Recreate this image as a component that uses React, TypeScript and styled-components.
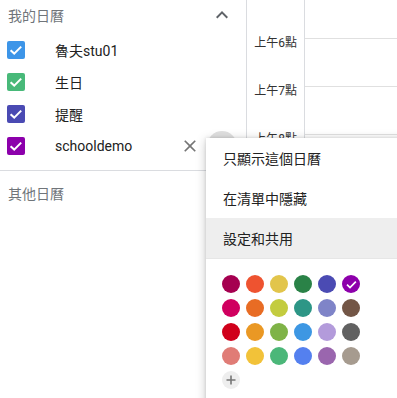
import React from "react";
import styled, { createGlobalStyle } from "styled-components";

const Global = createGlobalStyle`
  html, body { margin: 0; padding: 0; background: #fff; overflow: hidden; }
  body { font-family: Roboto, "Noto Sans CJK TC", sans-serif; }
`;

const Page = styled.div`
  position: relative;
  display: flex;
  width: 397px;
  height: 398px;
  overflow: hidden;
  background: #fff;
`;

const Sidebar = styled.aside`
  flex: none;
  width: 247px;
  box-sizing: border-box;
  border-right: 1px solid #dadce0;
`;

const SectionHeader = styled.div<{ $top?: number }>`
  display: flex;
  align-items: center;
  justify-content: space-between;
  height: 30px;
  margin-top: ${(p) => p.$top ?? 0}px;
  padding: 0 12px 0 8px;
  font-size: 14px;
  color: #70757a;
`;

const IconBox = styled.span<{ $size: number; $color: string }>`
  display: inline-flex;
  align-items: center;
  justify-content: center;
  width: ${(p) => p.$size}px;
  height: ${(p) => p.$size}px;
  color: ${(p) => p.$color};
  flex: none;
`;

const List = styled.div`
  padding-top: 4px;
`;

const Row = styled.div`
  display: flex;
  align-items: center;
  height: 32px;
  padding: 0 9px 0 7px;
`;

const Box = styled.span<{ $color: string }>`
  flex: none;
  display: inline-flex;
  align-items: center;
  justify-content: center;
  width: 18px;
  height: 18px;
  border-radius: 2px;
  background: ${(p) => p.$color};
  margin-right: 30px;
`;

const Label = styled.span`
  flex: 1;
  font-size: 14px;
  color: #212121;
  white-space: nowrap;
`;

const RemoveButton = styled.span`
  display: inline-flex;
  align-items: center;
  justify-content: center;
  width: 24px;
  height: 24px;
  margin-right: 5px;
  color: #757575;
`;

const MoreButton = styled.span`
  width: 30px;
  height: 30px;
  border-radius: 50%;
  background: #e0e0e0;
`;

const Divider = styled.div`
  height: 1px;
  background: #dadce0;
  margin-top: 8px;
`;

const TimeColumn = styled.div`
  flex: none;
  width: 58px;
  box-sizing: border-box;
  border-right: 1px solid #dadce0;
  padding-top: 37px;
`;

const TimeLabel = styled.div`
  height: 48px;
  padding-right: 7px;
  text-align: right;
  font-size: 12px;
  line-height: 12px;
  color: #333;
`;

const GridArea = styled.div`
  flex: 1;
  padding-top: 38px;
`;

const HourLine = styled.div`
  height: 48px;
  box-sizing: border-box;
  border-top: 1px solid #e0e0e0;
`;

const Menu = styled.div`
  position: absolute;
  left: 206px;
  top: 138px;
  width: 240px;
  height: 300px;
  background: #fff;
  box-shadow: 0 2px 10px rgba(0, 0, 0, 0.22), 0 0 3px rgba(0, 0, 0, 0.12);
`;

const MenuItem = styled.div<{ $highlighted?: boolean }>`
  display: flex;
  align-items: center;
  height: 40px;
  padding-left: 17px;
  font-size: 14px;
  color: #212121;
  background: ${(p) => (p.$highlighted ? "#eeeeee" : "transparent")};
`;

const MenuDivider = styled.div`
  height: 1px;
  background: #e6e6e6;
`;

const Palette = styled.div`
  display: grid;
  grid-template-columns: repeat(6, 18px);
  grid-auto-rows: 18px;
  gap: 6px;
  padding: 16px;
`;

const Swatch = styled.span<{ $color: string }>`
  display: inline-flex;
  align-items: center;
  justify-content: center;
  width: 18px;
  height: 18px;
  border-radius: 50%;
  background: ${(p) => p.$color};
`;

const AddSwatch = styled(Swatch)`
  color: #757575;
`;

const Check = ({ size = 18 }: { size?: number }) => (
  <svg width={size} height={size} viewBox="0 0 18 18">
    <path d="M3.6 9.2 L7.2 12.6 L14.2 5.6" fill="none" stroke="#fff" strokeWidth="2" />
  </svg>
);

const calendars = [
  { name: "魯夫stu01", color: "#3d95e8" },
  { name: "生日", color: "#48b979" },
  { name: "提醒", color: "#4a4ab3" },
  { name: "schooldemo", color: "#8c00ab", active: true },
];

const palette = [
  "#a50050", "#ee5330", "#e2c54b", "#2a8247", "#4b4bb3", "#8d00ab",
  "#d0005f", "#e86c24", "#c3cc3f", "#2d9686", "#7f84c8", "#735646",
  "#d0001b", "#ea9824", "#7fb347", "#3d97e3", "#b39bdb", "#616161",
  "#e07c76", "#f2c239", "#4bb779", "#5480ef", "#9a66ae", "#a69b8f",
];

export default function App() {
  return (
    <>
      <Global />
      <Page>
        <Sidebar>
          <SectionHeader>
            <span>我的日曆</span>
            <IconBox $size={24} $color="#5f6368">
              <svg width="24" height="24" viewBox="0 0 24 24">
                <path d="M7.41 15.41L12 10.83l4.59 4.58L18 14l-6-6-6 6z" fill="currentColor" />
              </svg>
            </IconBox>
          </SectionHeader>
          <List>
            {calendars.map((c) => (
              <Row key={c.name}>
                <Box $color={c.color}>
                  <Check />
                </Box>
                <Label>{c.name}</Label>
                {c.active && (
                  <>
                    <RemoveButton>
                      <svg width="20" height="20" viewBox="0 0 24 24">
                        <path
                          d="M19 6.41L17.59 5 12 10.59 6.41 5 5 6.41 10.59 12 5 17.59 6.41 19 12 13.41 17.59 19 19 17.59 13.41 12z"
                          fill="currentColor"
                        />
                      </svg>
                    </RemoveButton>
                    <MoreButton />
                  </>
                )}
              </Row>
            ))}
          </List>
          <Divider />
          <SectionHeader $top={7}>
            <span>其他日曆</span>
          </SectionHeader>
        </Sidebar>
        <TimeColumn>
          <TimeLabel>上午6點</TimeLabel>
          <TimeLabel>上午7點</TimeLabel>
          <TimeLabel>上午8點</TimeLabel>
        </TimeColumn>
        <GridArea>
          {Array.from({ length: 8 }).map((_, i) => (
            <HourLine key={i} />
          ))}
        </GridArea>
        <Menu>
          <MenuItem>只顯示這個日曆</MenuItem>
          <MenuItem>在清單中隱藏</MenuItem>
          <MenuItem $highlighted>設定和共用</MenuItem>
          <MenuDivider />
          <Palette>
            {palette.map((col, i) => (
              <Swatch key={col} $color={col}>
                {i === 5 && <Check size={15} />}
              </Swatch>
            ))}
            <AddSwatch $color="#eeeeee">
              <svg width="10" height="10" viewBox="0 0 10 10">
                <path d="M5 0.5V9.5M0.5 5H9.5" stroke="currentColor" strokeWidth="1.6" />
              </svg>
            </AddSwatch>
          </Palette>
        </Menu>
      </Page>
    </>
  );
}
